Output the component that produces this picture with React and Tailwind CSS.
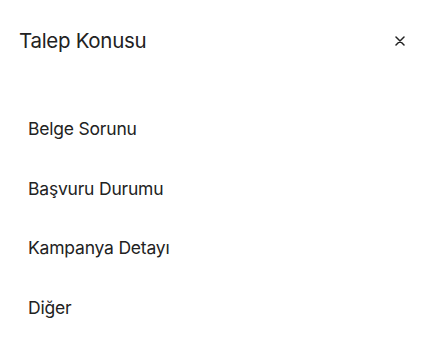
import React from "react";

const topics = ["Belge Sorunu", "Başvuru Durumu", "Kampanya Detayı", "Diğer"];

export default function App() {
  return (
    <div className="w-[430px] h-[345px] bg-white text-[#222222]" style={{ fontFamily: "Inter, 'Noto Sans', sans-serif" }}>
      <div className="flex items-center justify-between pl-[19px] pr-[24px] pt-[28px]">
        <h2 className="text-[20.5px] leading-[26px] tracking-[-0.3px]">Talep Konusu</h2>
        <button className="w-[12px] h-[12px] flex items-center justify-center">
          <svg width="10" height="10" viewBox="0 0 10 10" fill="none" stroke="#222" strokeWidth="1.5" strokeLinecap="round">
            <path d="M1 1L9 9M9 1L1 9" />
          </svg>
        </button>
      </div>
      <ul className="pl-[28px] pt-[63px]">
        {topics.map((t) => (
          <li key={t} className="h-[59.5px] text-[17.5px] leading-[24px] tracking-[-0.2px]">{t}</li>
        ))}
      </ul>
    </div>
  );
}
